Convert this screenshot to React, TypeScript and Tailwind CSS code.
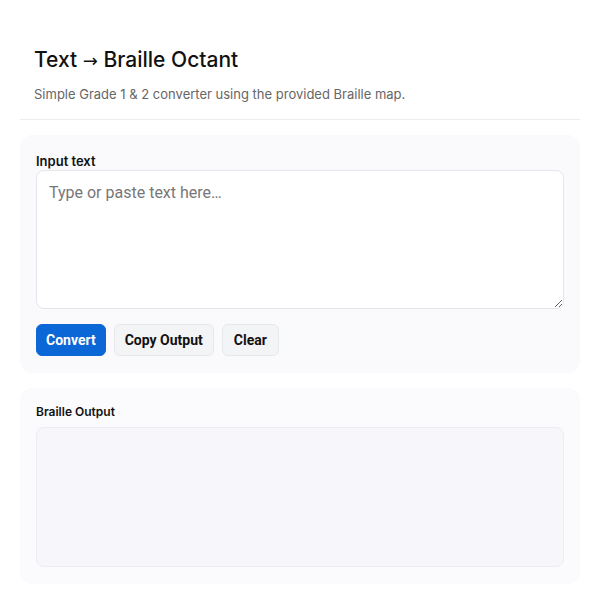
export default function App() {
  return (
    <div className="min-h-screen bg-white px-5 pt-[44px] font-['Inter',sans-serif] text-[#111]">
      {/* Header */}
      <div className="border-b border-[#ececef] px-[14px] pb-[15px]">
        <h1 className="text-[21px] font-medium leading-[32px]">
          Text <span className="font-['DejaVu_Sans',sans-serif] font-normal text-[18px]">→</span> Braille Octant
        </h1>
        <p className="mt-[7px] text-[13px] leading-[20px] text-[#666]">
          Simple Grade 1 &amp; 2 converter using the provided Braille map.
        </p>
      </div>

      {/* Input card */}
      <div className="mt-[15px] rounded-[12px] bg-[#fafafc] px-4 pb-[17px] pt-[17px]">
        <label className="block text-[13px] font-semibold leading-[18px] text-[#111]">Input text</label>
        <textarea
          placeholder="Type or paste text here…"
          className="block h-[139px] w-full resize-y rounded-[8px] border border-[#e6e6ea] bg-white px-3 pb-2 pt-[10px] font-['Roboto',sans-serif] text-[16px] leading-[24px] text-[#111] placeholder:text-[#777] outline-none"
        />
        <div className="mt-[15px] flex gap-2 font-['Roboto',sans-serif] text-[14px] font-bold">
          <button className="h-[32px] rounded-[6px] border border-[#0b66d6] bg-[#0b66d6] px-[9px] text-white">Convert</button>
          <button className="h-[32px] rounded-[6px] border border-[#e7e8ec] bg-[#f3f4f6] px-[10px] text-[#111]">Copy Output</button>
          <button className="h-[32px] rounded-[6px] border border-[#e7e8ec] bg-[#f3f4f6] px-[11px] text-[#111]">Clear</button>
        </div>
      </div>

      {/* Output card */}
      <div className="mt-[15px] rounded-[12px] bg-[#fbfbfd] px-4 pb-[17px] pt-[15px]">
        <div className="text-[12px] font-semibold leading-[18px] text-[#111]">Braille Output</div>
        <div className="mt-[6px] h-[140px] rounded-[8px] border border-[#ededf2] bg-[#f7f7fb]" />
      </div>
    </div>
  );
}
